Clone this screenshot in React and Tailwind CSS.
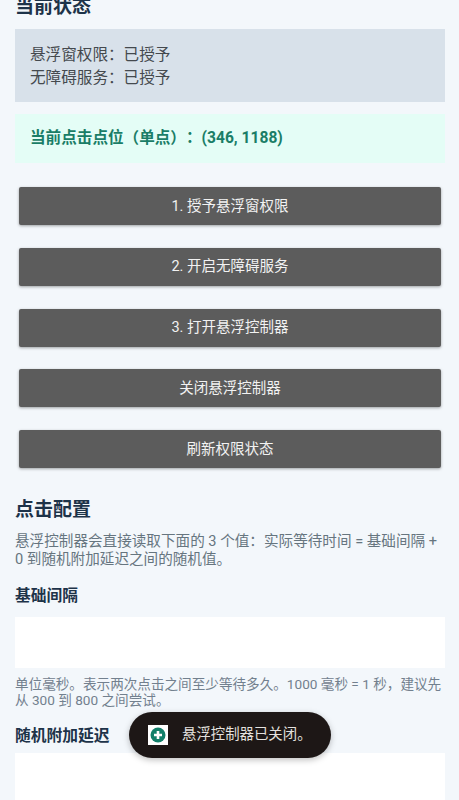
import React from "react";

const FONT = { fontFamily: '"Roboto", "Noto Sans CJK SC", sans-serif' };

const buttons = ["1. 授予悬浮窗权限", "2. 开启无障碍服务", "3. 打开悬浮控制器", "关闭悬浮控制器", "刷新权限状态"];

const App = () => {
  return (
    <div style={FONT} className="relative h-[800px] w-[459px] overflow-hidden bg-[#f3f7fb] [text-spacing-trim:space-all]">
      <div className="-mt-[6px] pr-[14px] pl-[15px]">
        <h2 className="text-[19px] leading-[26px] font-bold text-[#1d3349]">当前状态</h2>

        <div className="mt-[9px] h-[73px] bg-[#d8e1ea] px-[15px] pt-[15px] text-[15.6px] leading-[22.5px] text-[#44494e]">
          <p>悬浮窗权限：已授予</p>
          <p>无障碍服务：已授予</p>
        </div>

        <div className="mt-[12px] flex h-[49px] items-center bg-[#e4fdf6] px-[15px] text-[15.6px] font-bold text-[#1a7d67]">
          当前点击点位（单点）：(346, 1188)
        </div>

        <div className="mt-[24px] flex flex-col gap-[22.75px] px-[4px]">
          {buttons.map((label) => (
            <button
              key={label}
              className="h-[38px] rounded-[2px] bg-[#5c5c5c] pt-[1px] text-[14.5px] font-normal text-[#f2f2f2] shadow-[0_1px_3px_rgba(0,0,0,0.35)]"
            >
              {label}
            </button>
          ))}
        </div>

        <h2 className="mt-[29px] text-[19px] leading-[26px] font-bold text-[#1d3349]">点击配置</h2>
        <p className="mt-[10px] text-[14.6px] leading-[17.5px] text-[#66757f]">
          悬浮控制器会直接读取下面的 3 个值：实际等待时间 = 基础间隔 + 0 到随机附加延迟之间的随机值。
        </p>

        <h3 className="mt-[17px] text-[15.75px] leading-[22px] font-bold text-[#1d3349]">基础间隔</h3>
        <div className="mt-[10px] h-[51px] bg-white" />
        <p className="mt-[8px] text-[13.6px] leading-[16px] text-[#72808e]">
          单位毫秒。表示两次点击之间至少等待多久。1000 毫秒 = 1 秒，建议先从 300 到 800 之间尝试。
        </p>

        <h3 className="mt-[17px] text-[15.75px] leading-[22px] font-bold text-[#1d3349]">随机附加延迟</h3>
        <div className="mt-[6px] h-[60px] bg-white" />
      </div>

      {/* toast */}
      <div className="absolute top-[712px] left-[129px] flex h-[46px] w-[202px] items-center gap-[14px] rounded-full bg-[#1d1716] pl-[19px] shadow-[0_2px_6px_rgba(0,0,0,0.25)]">
        <div className="flex h-[20px] w-[20px] items-center justify-center bg-white">
          <svg width="16" height="16" viewBox="0 0 16 16">
            <circle cx="8" cy="8" r="7.5" fill="#12806a" />
            <path d="M8 4v8M4 8h8" stroke="#fff" strokeWidth="2.6" />
          </svg>
        </div>
        <span className="text-[14.4px] whitespace-nowrap text-[#e4e1df]">悬浮控制器已关闭。</span>
      </div>
    </div>
  );
};

export default App;
